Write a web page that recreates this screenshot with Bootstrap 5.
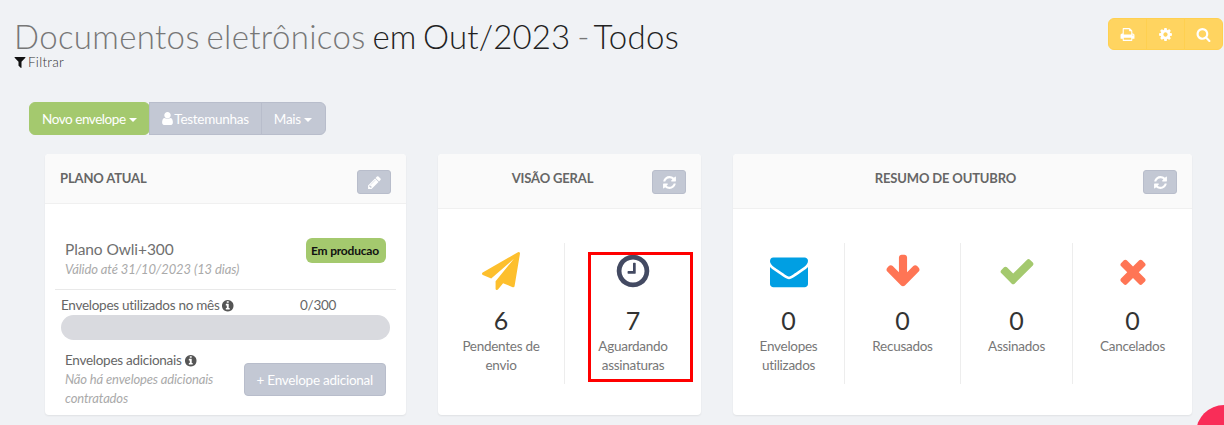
<!DOCTYPE html>
<html lang="pt-BR">
<head>
  <meta charset="UTF-8" />
  <meta name="viewport" content="width=device-width, initial-scale=1.0" />
  <title>Documentos eletrônicos</title>
  <link href="https://cdn.jsdelivr.net/npm/bootstrap@5.3.3/dist/css/bootstrap.min.css" rel="stylesheet" />
  <style>
    html, body { height: 425px; overflow: hidden; }
    body { background: #f0f2f5; color: #676a6c; font-family: Lato, "Liberation Sans", sans-serif; font-size: 13.5px; line-height: 20px; letter-spacing: -.27px; }
    .ico { width: 1em; height: 1em; fill: currentColor; vertical-align: -0.125em; }

    .page-top { padding: 17px 1px 0 14px; height: 102px; }
    .page-title { font-family: Lato, sans-serif; font-size: 33px; font-weight: 300; line-height: 38px; margin: 0; color: #777; letter-spacing: .34px; word-spacing: -2.5px; }
    .page-title b { font-weight: 300; color: #222; letter-spacing: .14px; }
    .page-title .title-end { letter-spacing: .3px; }
    .page-title .title-dash { word-spacing: -5.5px; }
    .filter-link { display: block; color: #333; line-height: 14px; margin-top: 0; font-weight: 300; letter-spacing: .3px; }
    .filter-link .ico { color: #111; font-size: 14px; margin-left: -1px; margin-right: -3px; }

    .tool-group .btn { background: #ffd460; border-color: #ffd050; color: #fff; width: 39px; height: 32px; padding: 0; font-size: 15px; margin-top: 1px; }

    .action-bar { padding-left: 29px; height: 52px; }
    .action-bar .btn { font-size: 13.5px; line-height: 20px; padding: 6px 12px; height: 33px; color: #fff; letter-spacing: -.45px; }
    .btn-leaf { background: #a4c96e; border-color: #a4c96e; }
    .btn-slate { background: #c3c8d4; border-color: #b8bdcb; }
    .action-bar .btn-slate { letter-spacing: -.27px; }
    .action-bar .btn-slate .ico { font-size: 15px; margin-left: -2px; margin-right: -3px; }
    .action-bar .btn-slate.dropdown-toggle { padding-right: 13px; }
    .action-bar .dropdown-toggle::after { border-top-width: 4px; border-left-width: 4px; border-right-width: 4px; vertical-align: 2px; margin-left: 3px; }

    .cards-row { padding-left: 45px; gap: 32px; }
    .panel { background: #fff; border: 0; border-radius: 4px; height: 261px; box-shadow: 0 1px 2px rgba(0,0,0,.07); }
    .panel-plan { width: 361px; }
    .panel-view { width: 263px; }
    .panel-month { width: 459px; }
    .panel-head { background: #fafafa; border-bottom: 1px solid #f0f0f0; height: 55px; padding: 16px 15px 0; border-radius: 4px 4px 0 0; }
    .panel-plan .panel-head { height: 50px; }
    .panel-name { font-size: 13px; font-weight: 700; color: #666; line-height: 17px; letter-spacing: -.15px; flex-grow: 1; }
    .panel-view .panel-name, .panel-month .panel-name { text-align: center; }
    .head-btn { background: #c3c8d4; border: 1px solid #b8bdcb; color: #fff; width: 34px; height: 24px; padding: 0; border-radius: 3px; line-height: 20px; font-size: 15px; }

    .stat-row { margin-top: 34px; height: 141px; }
    .stat-cell { text-align: center; border-right: 1px solid #ededed; height: 141px; padding: 0 12px; }
    .stat-cell:last-child { border-right: 0; }
    .stat-ico { height: 56px; font-size: 38px; line-height: 56px; display: flex; align-items: center; justify-content: center; }
    .stat-num { font-size: 25px; line-height: 30px; margin-top: 6px; color: #333; font-weight: 400; letter-spacing: 0; }
    .stat-label { line-height: 19px; margin-top: 2px; color: #777; }
    .panel-view .stat-cell:nth-child(1) { width: 127px; }
    .panel-view .stat-cell:nth-child(2) { width: 136px; }
    .panel-month .stat-cell:nth-child(1) { width: 112px; }
    .panel-month .stat-cell:nth-child(2) { width: 116px; }
    .panel-month .stat-cell:nth-child(3) { width: 112px; }
    .panel-month .stat-cell:nth-child(4) { width: 119px; }

    .red-box { position: absolute; left: 150px; top: 98px; width: 105px; height: 130px; border: 3px solid #f00; pointer-events: none; }

    .plan-body { padding: 35px 20px 0 20px; }
    .plan-name { font-size: 15.5px; line-height: 20px; color: #707070; font-weight: 400; letter-spacing: -.1px; }
    .plan-valid { font-style: italic; color: #aaa; font-size: 13px; line-height: 20px; letter-spacing: -.1px; }
    .plan-badge { background: #a4c96e; color: #111; font-size: 12px; font-weight: 700; border-radius: 6px; padding: 4px 5px; line-height: 17px; height: 25px; margin-top: -1px; letter-spacing: -.2px; width: 80px; white-space: nowrap; }
    .plan-rule { border-top: 1px solid #e9e9e9; margin: 10px 10px 0 10px; }
    .usage { padding: 6px 17px 0 16px; color: #666; line-height: 18px; }
    .usage .ico { font-size: 13.5px; vertical-align: -2px; color: #555; margin-left: -2px; }
    .usage-count { width: 89px; }
    .usage-bar { background: #d9dadf; border-radius: 13px; height: 25px; margin: 1px 16px 0 16px; }
    .extra { padding: 10px 20px 0 20px; }
    .extra-title { line-height: 20px; color: #666; }
    .extra-title .ico { font-size: 13.5px; vertical-align: -2px; color: #555; margin-left: -1px; }
    .extra-note { font-style: italic; color: #aaa; font-size: 13px; line-height: 19px; width: 170px; letter-spacing: -.15px; }
    .btn-extra { background: #c3c8d4; border: 1px solid #b8bdcb; color: #fff; font-size: 13.5px; height: 33px; padding: 0 12px; margin-top: 13px; border-radius: 4px; white-space: nowrap; letter-spacing: -.25px; }

    .help-dot { position: fixed; left: 1196px; top: 405px; width: 56px; height: 56px; border-radius: 50%; background: #f92d58; }
  </style>
</head>
<body>

  <svg width="0" height="0" class="position-absolute">
    <symbol id="i-filter" viewBox="0 0 1792 1792"><path d="M1595 295q17 41-14 70l-493 493v742q0 42-39 59-13 5-25 5-27 0-45-19l-256-256q-19-19-19-45v-486l-493-493q-31-29-14-70 17-39 59-39h1280q42 0 59 39z"/></symbol>
    <symbol id="i-user" viewBox="0 0 1792 1792"><path d="M1536 1399q0 109-62.5 187t-150.5 78h-854q-88 0-150.5-78t-62.5-187q0-85 8.5-160.5t31.5-152 58.5-131 94-89 134.5-34.5q131 128 313 128t313-128q76 0 134.5 34.5t94 89 58.5 131 31.5 152 8.5 160.5zm-256-887q0 159-112.5 271.5t-271.5 112.5-271.5-112.5-112.5-271.5 112.5-271.5 271.5-112.5 271.5 112.5 112.5 271.5z"/></symbol>
    <symbol id="i-pencil" viewBox="0 0 1792 1792"><path d="M491 1536l91-91-235-235-91 91v107h128v128h107zm523-928q0-22-22-22-10 0-17 7l-542 542q-7 7-7 17 0 22 22 22 10 0 17-7l542-542q7-7 7-17zm-54-192l416 416-832 832h-416v-416zm683 96q0 53-37 90l-166 166-416-416 166-165q36-38 90-38 53 0 91 38l235 234q37 39 37 91z"/></symbol>
    <symbol id="i-refresh" viewBox="0 0 1792 1792"><path d="M1639 1056q0 5-1 7-64 268-268 434.5t-478 166.5q-146 0-282.5-55t-243.5-157l-129 129q-19 19-45 19t-45-19-19-45v-448q0-26 19-45t45-19h448q26 0 45 19t19 45-19 45l-137 137q71 66 161 102t187 36q134 0 250-65t186-179q11-17 53-117 8-23 30-23h192q13 0 22.5 9.5t9.5 22.5zm25-800v448q0 26-19 45t-45 19h-448q-26 0-45-19t-19-45 19-45l138-138q-148-137-349-137-134 0-250 65t-186 179q-11 17-53 117-8 23-30 23h-199q-13 0-22.5-9.5t-9.5-22.5v-7q65-268 270-434.5t480-166.5q146 0 284 55.5t245 156.5l130-129q19-19 45-19t45 19 19 45z"/></symbol>
    <symbol id="i-print" viewBox="0 0 1792 1792"><path d="M448 1536h896v-256h-896v256zm0-640h896v-384h-160q-40 0-68-28t-28-68v-160h-640v640zm1152 64q0-26-19-45t-45-19-45 19-19 45 19 45 45 19 45-19 19-45zm128 0v416q0 13-9.5 22.5t-22.5 9.5h-224v160q0 40-28 68t-68 28h-960q-40 0-68-28t-28-68v-160h-224q-13 0-22.5-9.5t-9.5-22.5v-416q0-79 56.5-135.5t135.5-56.5h64v-544q0-40 28-68t68-28h672q40 0 88 20t76 48l152 152q28 28 48 76t20 88v256h64q79 0 135.5 56.5t56.5 135.5z"/></symbol>
    <symbol id="i-cog" viewBox="0 0 1792 1792"><path d="M1152 896q0-106-75-181t-181-75-181 75-75 181 75 181 181 75 181-75 75-181zm512-109v222q0 12-8 23t-20 13l-185 28q-19 54-39 91 35 50 107 138 10 12 10 25t-9 23q-27 37-99 108t-94 71q-12 0-26-9l-138-108q-44 23-91 38-16 136-29 186-7 28-36 28h-222q-14 0-24.5-8.5t-11.5-21.5l-28-184q-49-16-90-37l-141 107q-10 9-25 9-14 0-25-11-126-114-165-168-7-10-7-23 0-12 8-23 15-21 51-66.5t54-70.5q-27-50-41-99l-183-27q-13-2-21-12.5t-8-23.5v-222q0-12 8-23t19-13l186-28q14-46 39-92-40-57-107-138-10-12-10-24 0-10 9-23 26-36 98.5-107.5t94.5-71.5q13 0 26 10l138 107q44-23 91-38 16-136 29-186 7-28 36-28h222q14 0 24.5 8.5t11.5 21.5l28 184q49 16 90 37l142-107q9-9 24-9 13 0 25 10 129 119 165 170 7 8 7 22 0 12-8 23-15 21-51 66.5t-54 70.5q26 50 41 98l183 28q13 2 21 12.5t8 23.5z"/></symbol>
    <symbol id="i-search" viewBox="0 0 1792 1792"><path d="M1216 832q0-185-131.5-316.5t-316.5-131.5-316.5 131.5-131.5 316.5 131.5 316.5 316.5 131.5 316.5-131.5 131.5-316.5zm512 832q0 52-38 90t-90 38q-54 0-90-38l-343-342q-179 124-399 124-143 0-273.5-55.5t-225-150-150-225-55.5-273.5 55.5-273.5 150-225 225-150 273.5-55.5 273.5 55.5 225 150 150 225 55.5 273.5q0 220-124 399l343 343q37 37 37 90z"/></symbol>
    <symbol id="i-info" viewBox="0 0 1792 1792"><path d="M1152 1376v-160q0-14-9-23t-23-9h-96v-512q0-14-9-23t-23-9h-320q-14 0-23 9t-9 23v160q0 14 9 23t23 9h96v320h-96q-14 0-23 9t-9 23v160q0 14 9 23t23 9h448q14 0 23-9t9-23zm-128-896v-160q0-14-9-23t-23-9h-192q-14 0-23 9t-9 23v160q0 14 9 23t23 9h192q14 0 23-9t9-23zm640 416q0 209-103 385.5t-279.5 279.5-385.5 103-385.5-103-279.5-279.5-103-385.5 103-385.5 279.5-279.5 385.5-103 385.5 103 279.5 279.5 103 385.5z"/></symbol>
    <symbol id="i-plane" viewBox="0 0 1792 1792"><path d="M1764 11q33 24 27 64l-256 1536q-5 29-32 45-14 8-31 8-11 0-24-5l-453-185-242 295q-18 23-49 23-13 0-22-4-19-7-30.5-23.5t-11.5-36.5v-349l864-1059-1069 925-395-162q-37-14-40-55-2-40 32-59l1664-960q15-9 32-9 20 0 36 11z"/></symbol>
    <symbol id="i-clock" viewBox="0 0 1792 1792"><path d="M1024 544v448q0 14-9 23t-23 9h-320q-14 0-23-9t-9-23v-64q0-14 9-23t23-9h224v-352q0-14 9-23t23-9h64q14 0 23 9t9 23zm416 352q0-148-73-273t-198-198-273-73-273 73-198 198-73 273 73 273 198 198 273 73 273-73 198-198 73-273zm224 0q0 209-103 385.5t-279.5 279.5-385.5 103-385.5-103-279.5-279.5-103-385.5 103-385.5 279.5-279.5 385.5-103 385.5 103 279.5 279.5 103 385.5z"/></symbol>
    <symbol id="i-mail" viewBox="0 0 1792 1792"><path d="M1792 710v794q0 66-47 113t-113 47h-1472q-66 0-113-47t-47-113v-794q44 49 101 87 362 246 497 345 57 42 92.5 65.5t94.5 48 110 24.5h2q51 0 110-24.5t94.5-48 92.5-65.5q170-123 498-345 57-39 100-87zm0-294q0 79-49 151t-122 123q-376 261-468 325-10 7-42.5 30.5t-54 38-52 32.5-57.5 27-50 9h-2q-23 0-50-9t-57.5-27-52-32.5-54-38-42.5-30.5q-91-64-262-182.5t-205-142.5q-62-42-117-115.5t-55-136.5q0-78 41.5-130t118.5-52h1472q65 0 112.5 47t47.5 113z"/></symbol>
    <symbol id="i-down" viewBox="0 0 1792 1792"><path d="M1675 832q0 53-37 90l-651 652q-39 37-91 37-53 0-90-37l-651-652q-38-36-38-90 0-53 38-91l74-75q39-37 91-37 53 0 90 37l294 294v-704q0-52 38-90t90-38h128q52 0 90 38t38 90v704l294-294q37-37 90-37 52 0 91 37l75 75q37 39 37 91z"/></symbol>
    <symbol id="i-check" viewBox="0 0 1792 1792"><path d="M1671 566q0 40-28 68l-724 724-136 136q-28 28-68 28t-68-28l-136-136-362-362q-28-28-28-68t28-68l136-136q28-28 68-28t68 28l294 295 656-657q28-28 68-28t68 28l136 136q28 28 28 68z"/></symbol>
    <symbol id="i-times" viewBox="0 0 1792 1792"><path d="M1490 1322q0 40-28 68l-136 136q-28 28-68 28t-68-28l-294-294-294 294q-28 28-68 28t-68-28l-136-136q-28-28-28-68t28-68l294-294-294-294q-28-28-28-68t28-68l136-136q28-28 68-28t68 28l294 294 294-294q28-28 68-28t68 28l136 136q28 28 28 68t-28 68l-294 294 294 294q28 28 28 68z"/></symbol>
  </svg>

  <div class="page-top d-flex justify-content-between align-items-start">
    <div>
      <h1 class="page-title">Documentos eletrônicos <b>em Out/2023</b> <span class="title-dash">- </span><b class="title-end">Todos</b></h1>
      <a class="filter-link text-decoration-none" href="#"><svg class="ico"><use href="#i-filter"/></svg> Filtrar</a>
    </div>
    <div class="btn-group tool-group">
      <button class="btn" type="button"><svg class="ico"><use href="#i-print"/></svg></button>
      <button class="btn" type="button"><svg class="ico"><use href="#i-cog"/></svg></button>
      <button class="btn" type="button"><svg class="ico"><use href="#i-search"/></svg></button>
    </div>
  </div>

  <div class="action-bar">
    <div class="btn-group">
      <button class="btn btn-leaf dropdown-toggle" type="button">Novo envelope</button>
      <button class="btn btn-slate" type="button"><svg class="ico"><use href="#i-user"/></svg> Testemunhas</button>
      <button class="btn btn-slate dropdown-toggle" type="button">Mais</button>
    </div>
  </div>

  <div class="cards-row d-flex align-items-start">
    <div class="card panel panel-plan">
      <div class="panel-head d-flex align-items-start">
        <div class="panel-name">PLANO ATUAL</div>
        <button class="head-btn" type="button"><svg class="ico"><use href="#i-pencil"/></svg></button>
      </div>
      <div class="plan-body d-flex justify-content-between">
        <div>
          <div class="plan-name">Plano Owli+300</div>
          <div class="plan-valid">Válido até 31/10/2023 (13 dias)</div>
        </div>
        <span class="plan-badge">Em producao</span>
      </div>
      <div class="plan-rule"></div>
      <div class="usage d-flex justify-content-between">
        <span>Envelopes utilizados no mês <svg class="ico"><use href="#i-info"/></svg></span>
        <span class="usage-count">0/300</span>
      </div>
      <div class="usage-bar"></div>
      <div class="extra d-flex justify-content-between">
        <div>
          <div class="extra-title">Envelopes adicionais <svg class="ico"><use href="#i-info"/></svg></div>
          <div class="extra-note">Não há envelopes adicionais contratados</div>
        </div>
        <button class="btn-extra" type="button">+ Envelope adicional</button>
      </div>
    </div>

    <div class="card panel panel-view">
      <div class="panel-head d-flex align-items-start">
        <div class="panel-name">VISÃO GERAL</div>
        <button class="head-btn" type="button"><svg class="ico"><use href="#i-refresh"/></svg></button>
      </div>
      <div class="stat-row d-flex">
        <div class="stat-cell">
          <div class="stat-ico" style="color:#fdbf2d"><svg class="ico"><use href="#i-plane"/></svg></div>
          <div class="stat-num">6</div>
          <div class="stat-label">Pendentes de envio</div>
        </div>
        <div class="stat-cell">
          <div class="stat-ico" style="color:#434a62"><svg class="ico"><use href="#i-clock"/></svg></div>
          <div class="stat-num">7</div>
          <div class="stat-label">Aguardando assinaturas</div>
        </div>
      </div>
      <div class="red-box"></div>
    </div>

    <div class="card panel panel-month">
      <div class="panel-head d-flex align-items-start">
        <div class="panel-name">RESUMO DE OUTUBRO</div>
        <button class="head-btn" type="button"><svg class="ico"><use href="#i-refresh"/></svg></button>
      </div>
      <div class="stat-row d-flex">
        <div class="stat-cell">
          <div class="stat-ico" style="color:#009fe3"><svg class="ico"><use href="#i-mail"/></svg></div>
          <div class="stat-num">0</div>
          <div class="stat-label">Envelopes utilizados</div>
        </div>
        <div class="stat-cell">
          <div class="stat-ico" style="color:#ff7555"><svg class="ico"><use href="#i-down"/></svg></div>
          <div class="stat-num">0</div>
          <div class="stat-label">Recusados</div>
        </div>
        <div class="stat-cell">
          <div class="stat-ico" style="color:#a4c96e"><svg class="ico"><use href="#i-check"/></svg></div>
          <div class="stat-num">0</div>
          <div class="stat-label">Assinados</div>
        </div>
        <div class="stat-cell">
          <div class="stat-ico" style="color:#ff7555"><svg class="ico"><use href="#i-times"/></svg></div>
          <div class="stat-num">0</div>
          <div class="stat-label">Cancelados</div>
        </div>
      </div>
    </div>
  </div>

  <div class="help-dot"></div>

  <script src="https://cdn.jsdelivr.net/npm/bootstrap@5.3.3/dist/js/bootstrap.bundle.min.js"></script>
</body>
</html>
